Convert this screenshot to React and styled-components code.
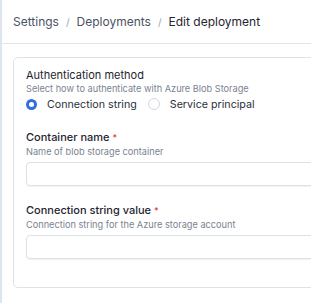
import React from 'react';
import styled, { createGlobalStyle } from 'styled-components';

const Global = createGlobalStyle`
  html, body {
    margin: 0;
    padding: 0;
    background: #fff;
    overflow: hidden;
  }
  body {
    font-family: Inter, "Noto Sans", sans-serif;
    -webkit-font-smoothing: antialiased;
  }
`

const Page = styled.div`
  width: 311px;
  height: 303px;
  border-left: 2px solid #dde6ef;
  box-sizing: border-box;
  overflow: hidden;
`

const Header = styled.div`
  height: 43px;
  display: flex;
  align-items: center;
  gap: 6px;
  padding-left: 11px;
  border-bottom: 1px solid #dde6ef;
  font-size: 12px;
  color: #4a5363;
  white-space: nowrap;
`

const Sep = styled.span`
  color: #9aa3b0;
  font-size: 10px;
  margin: 0 1px;
`

const Current = styled.span`
  color: #1f2530;
`

const Body = styled.div`
  padding: 13px 0 0 11px;
`

const Card = styled.div`
  width: 420px;
  height: 231px;
  box-sizing: border-box;
  border: 1px solid #dde3ea;
  border-radius: 5px;
  padding: 10px 12px;
`

const Field = styled.div`
  margin-bottom: ${p => p.gap || 0}px;
`

const Label = styled.div`
  font-size: 11px;
  font-weight: ${p => p.bold ? 500 : 400};
  color: #1f2530;
  line-height: 14px;
`

const Req = styled.span`
  color: #e0393e;
  font-size: 9px;
  margin-left: 3px;
`

const Hint = styled.div`
  font-size: 9.2px;
  color: #7b8390;
  line-height: 13px;
`

const Radios = styled.div`
  display: flex;
  align-items: center;
  gap: 11px;
  margin-top: 1px;
  height: 16px;
`

const Option = styled.label`
  display: flex;
  align-items: center;
  gap: 10px;
  font-size: 10.7px;
  color: #2b313c;
`

const Dot = styled.span`
  width: ${p => p.on ? 5 : 10}px;
  height: ${p => p.on ? 5 : 10}px;
  border-radius: 50%;
  box-sizing: content-box;
  border: ${p => p.on ? '3px solid #2f6fe0' : '1px solid #d3d8df'};
  background: #fff;
`

const Input = styled.div`
  margin-top: 4px;
  height: 22px;
  border: 1px solid #dbe1e8;
  border-radius: 4px;
  box-shadow: 0 1px 1px rgba(30, 40, 60, 0.06);
`

const App = () => {
  return (
    <Page>
      <Global />
      <Header>
        <span>Settings</span>
        <Sep>/</Sep>
        <span>Deployments</span>
        <Sep>/</Sep>
        <Current>Edit deployment</Current>
      </Header>
      <Body>
        <Card>
          <Field gap={18}>
            <Label>Authentication method</Label>
            <Hint>Select how to authenticate with Azure Blob Storage</Hint>
            <Radios>
              <Option><Dot on /> Connection string</Option>
              <Option><Dot /> Service principal</Option>
            </Radios>
          </Field>
          <Field gap={17}>
            <Label bold>Container name<Req>*</Req></Label>
            <Hint>Name of blob storage container</Hint>
            <Input />
          </Field>
          <Field>
            <Label bold>Connection string value<Req>*</Req></Label>
            <Hint>Connection string for the Azure storage account</Hint>
            <Input />
          </Field>
        </Card>
      </Body>
    </Page>
  )
}

export default App;
